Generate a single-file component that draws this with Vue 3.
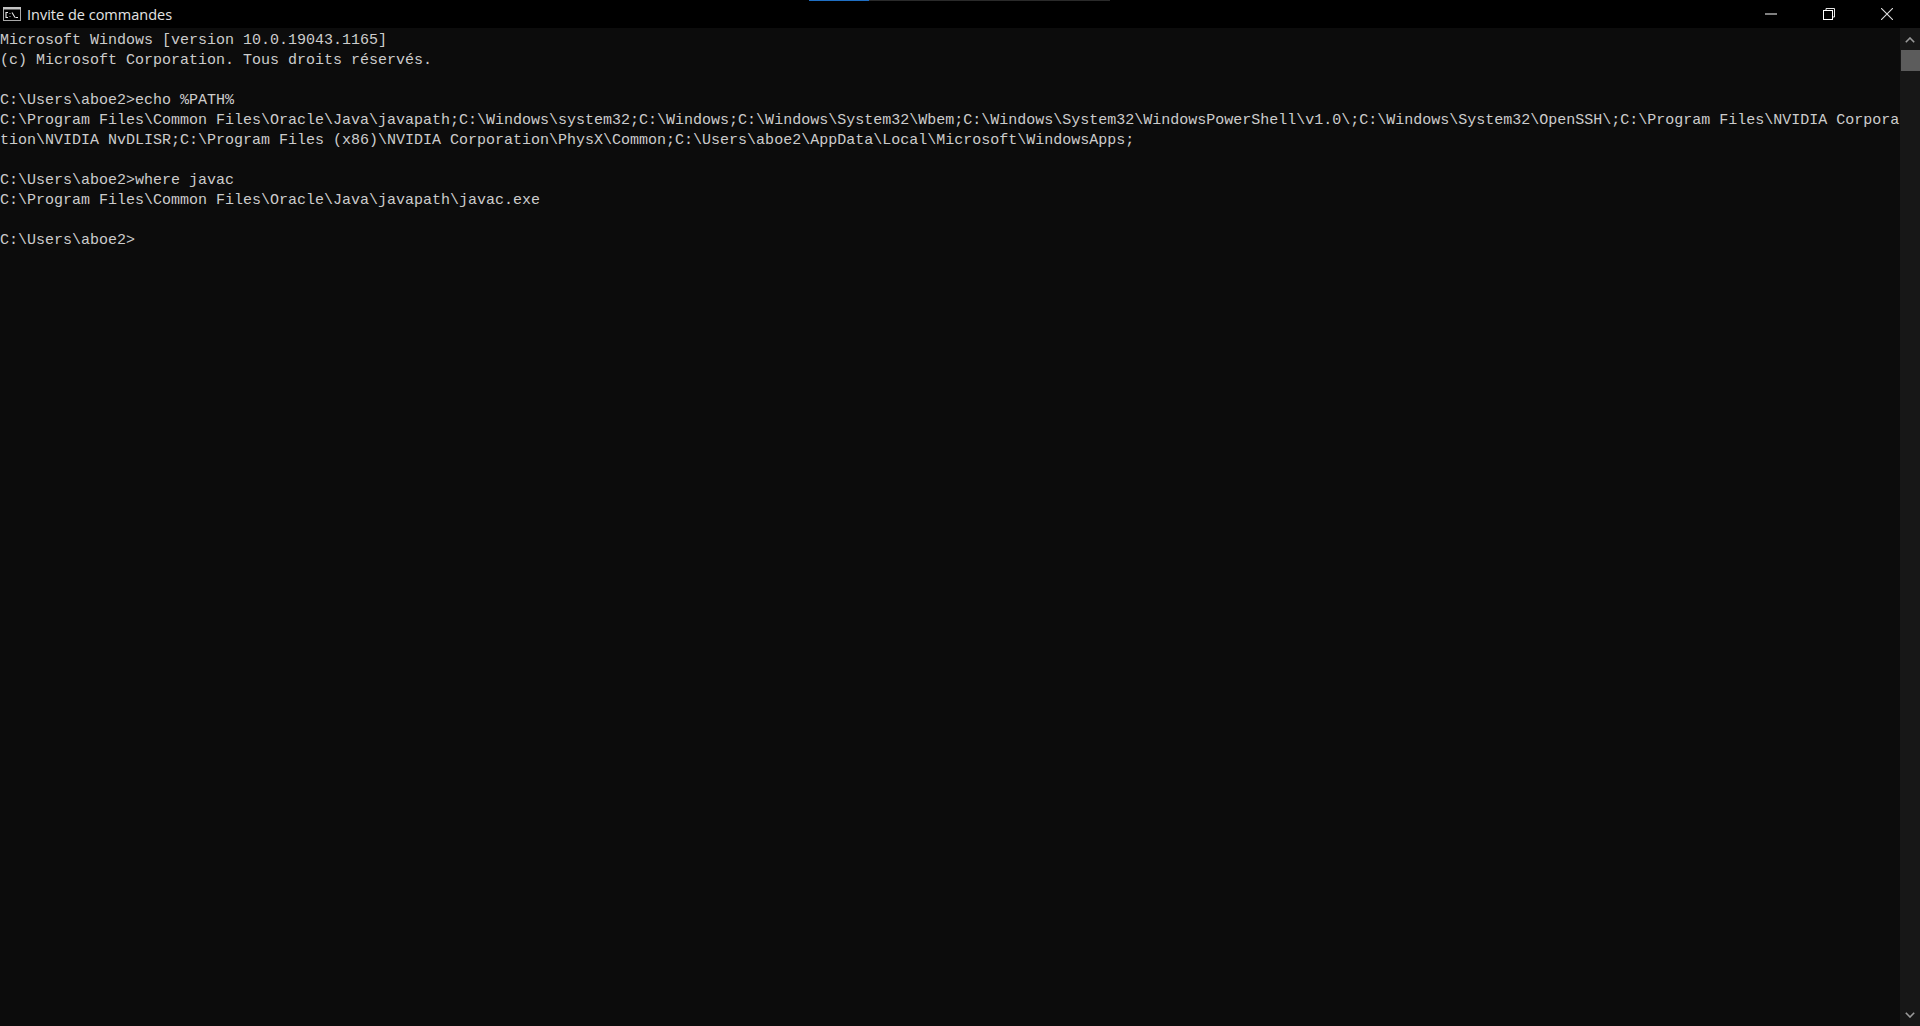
<script setup>
const lines = [
  'Microsoft Windows [version 10.0.19043.1165]',
  '(c) Microsoft Corporation. Tous droits réservés.',
  '',
  'C:\\Users\\aboe2>echo %PATH%',
  'C:\\Program Files\\Common Files\\Oracle\\Java\\javapath;C:\\Windows\\system32;C:\\Windows;C:\\Windows\\System32\\Wbem;C:\\Windows\\System32\\WindowsPowerShell\\v1.0\\;C:\\Windows\\System32\\OpenSSH\\;C:\\Program Files\\NVIDIA Corpora',
  'tion\\NVIDIA NvDLISR;C:\\Program Files (x86)\\NVIDIA Corporation\\PhysX\\Common;C:\\Users\\aboe2\\AppData\\Local\\Microsoft\\WindowsApps;',
  '',
  'C:\\Users\\aboe2>where javac',
  'C:\\Program Files\\Common Files\\Oracle\\Java\\javapath\\javac.exe',
  '',
  'C:\\Users\\aboe2>'
]
</script>

<template>
  <div class="window">
    <div class="accent"><span class="accent-on"></span></div>
    <header class="titlebar">
      <svg class="app-icon" width="20" height="16" viewBox="0 0 20 16">
        <rect x="1.5" y="1.5" width="17" height="13" fill="#000" stroke="#a8a8a8" stroke-width="1" />
        <rect x="1" y="1" width="18" height="2.5" fill="#c4c4c4" />
        <path d="M6 6.5H4v5h2M8 7v.8M8 10v.8M10 6.5l3 5M13.5 11.5h2.5" fill="none" stroke="#e8e8e8" stroke-width="1.1" />
      </svg>
      <span class="title">Invite de commandes</span>
      <div class="controls">
        <button class="ctrl">
          <svg width="12" height="2" viewBox="0 0 12 2"><path d="M0 1h12" stroke="#fff" stroke-width="1" /></svg>
        </button>
        <button class="ctrl">
          <svg width="12" height="12" viewBox="0 0 12 12">
            <path d="M3 2.5V.5h8.5V9H9.5" fill="none" stroke="#e8e8e8" stroke-width="1" />
            <rect x=".5" y="2.5" width="9" height="9" fill="none" stroke="#fff" stroke-width="1" />
          </svg>
        </button>
        <button class="ctrl">
          <svg width="12" height="12" viewBox="0 0 12 12"><path d="M0 0l12 12M12 0L0 12" stroke="#ddd" stroke-width="1.1" /></svg>
        </button>
      </div>
    </header>
    <main class="body">
      <div class="console">
        <div v-for="(line, i) in lines" :key="i" class="line">{{ line }}</div>
      </div>
      <aside class="scrollbar">
        <svg class="arrow" width="10" height="6" viewBox="0 0 10 6"><path d="M.8 5.2L5 1l4.2 4.2" fill="none" stroke="#9a9a9a" stroke-width="1.6" /></svg>
        <div class="thumb"></div>
        <div class="track"></div>
        <svg class="arrow" width="10" height="6" viewBox="0 0 10 6"><path d="M.8.8L5 5l4.2-4.2" fill="none" stroke="#9a9a9a" stroke-width="1.6" /></svg>
      </aside>
    </main>
  </div>
</template>

<style>
html, body { margin: 0; background: #0c0c0c; overflow: hidden; }
</style>

<style scoped>
.window {
  position: relative;
  display: flex;
  flex-direction: column;
  width: 1920px;
  height: 1026px;
  background: #0c0c0c;
  overflow: hidden;
}
.accent {
  position: absolute;
  top: 0;
  left: 809px;
  width: 301px;
  height: 1px;
  background: #2a2a2a;
}
.accent-on {
  display: block;
  width: 60px;
  height: 1px;
  background: #1f6fc4;
}
.titlebar {
  display: flex;
  align-items: center;
  flex: 0 0 28px;
  height: 28px;
  background: #000;
}
.app-icon { margin-left: 2px; flex: none; }
.title {
  margin-left: 5px;
  font: 14.5px "Open Sans", "Liberation Sans", sans-serif;
  color: #e4e4e4;
}
.controls { display: flex; margin-left: auto; margin-right: 4px; }
.ctrl {
  display: flex;
  align-items: center;
  justify-content: center;
  width: 58px;
  height: 28px;
  padding: 0;
  border: 0;
  background: transparent;
}
.body { display: flex; flex: 1; min-height: 0; }
.console {
  flex: 1;
  min-width: 0;
  padding-top: 3px;
  font: 15px/20px "Liberation Mono", "DejaVu Sans Mono", monospace;
  color: #cccccc;
  overflow: hidden;
}
.line { height: 20px; white-space: pre; }
.scrollbar {
  display: flex;
  flex-direction: column;
  align-items: center;
  flex: 0 0 20px;
  padding-top: 9px;
  padding-bottom: 8px;
  box-sizing: border-box;
  background: #171717;
}
.arrow { flex: none; }
.thumb {
  flex: none;
  width: 19px;
  height: 21px;
  margin-top: 7px;
  background: #5c5c5c;
}
.track { flex: 1; }
</style>
